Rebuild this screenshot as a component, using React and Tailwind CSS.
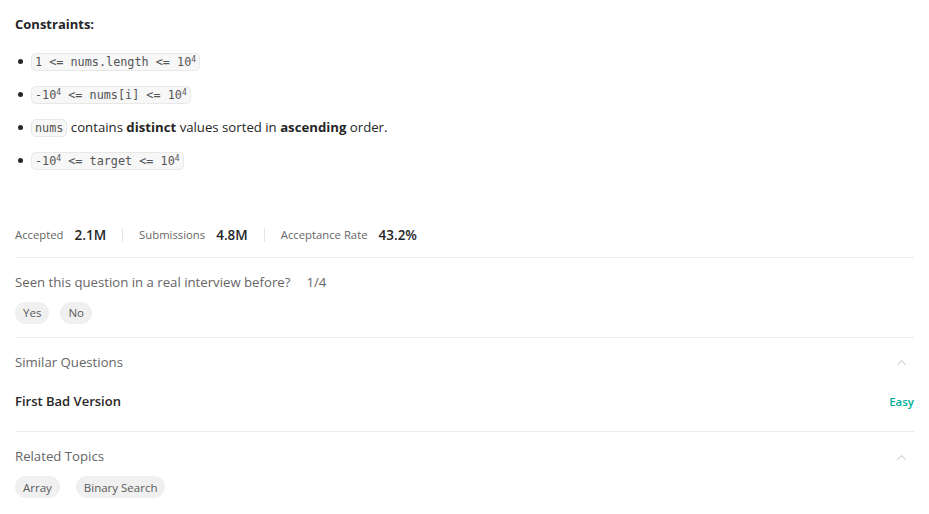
import { ChevronUp } from 'lucide-react';

function Code({ children }) {
  return (
    <code className="rounded-[5px] border border-[#e8e8e8] bg-[#f7f7f8] px-[3px] py-[1px] text-[11.8px] leading-[17px] text-[#555] [font-family:'DejaVu_Sans_Mono',monospace]">
      {children}
    </code>
  );
}

function Pow() {
  return <sup className="text-[8px]">4</sup>;
}

function Pill({ children }) {
  return (
    <span className="inline-flex h-[22px] items-center rounded-full bg-[#f0f0f0] px-[8px] text-[11.5px] text-[#5a5a5a]">
      {children}
    </span>
  );
}

function Stat({ label, value }) {
  return (
    <div className="flex items-center gap-[11px]">
      <span className="text-[11.3px] text-[#666]">{label}</span>
      <span className="text-[13.5px] font-semibold text-[#262626]">{value}</span>
    </div>
  );
}

export default function App() {
  return (
    <div className="min-h-[514px] bg-white px-[15px] pt-[14px] text-[#262626] [font-family:'Open_Sans',sans-serif]">
      <div className="text-[13px] font-bold leading-[20px]">Constraints:</div>

      <ul className="mt-[17px] flex flex-col gap-[12px] pl-[3px]">
        {[
          <Code>1 &lt;= nums.length &lt;= 10<Pow /></Code>,
          <Code>-10<Pow /> &lt;= nums[i] &lt;= 10<Pow /></Code>,
          <>
            <Code>nums</Code> contains <b>distinct</b> values sorted in <b>ascending</b> order.
          </>,
          <Code>-10<Pow /> &lt;= target &lt;= 10<Pow /></Code>,
        ].map((item, i) => (
          <li key={i} className="flex h-[21px] items-center text-[13.2px]">
            <span className="mr-[8px] h-[5px] w-[5px] rounded-full bg-[#262626]" />
            <span className="leading-[21px]">{item}</span>
          </li>
        ))}
      </ul>

      <div className="mt-[54px] flex items-center">
        <Stat label="Accepted" value="2.1M" />
        <div className="mx-[16px] h-[14px] w-px bg-[#e5e5e5]" />
        <Stat label="Submissions" value="4.8M" />
        <div className="mx-[16px] h-[14px] w-px bg-[#e5e5e5]" />
        <Stat label="Acceptance Rate" value="43.2%" />
      </div>

      <div className="mt-[12px] h-px bg-[#ebebeb]" />

      <div className="mt-[15px] flex items-center gap-[16px] text-[13.2px] text-[#666]">
        <span>Seen this question in a real interview before?</span>
        <span>1/4</span>
      </div>
      <div className="mt-[9px] flex gap-[11px]">
        <Pill>Yes</Pill>
        <Pill>No</Pill>
      </div>

      <div className="mt-[13px] h-px bg-[#ebebeb]" />

      <div className="mt-[15px] flex items-center justify-between text-[13.2px] text-[#666]">
        <span>Similar Questions</span>
        <ChevronUp className="mr-[5px] h-[15px] w-[15px] text-[#d4d4d4]" strokeWidth={2} />
      </div>
      <div className="mt-[19px] flex items-center justify-between">
        <span className="text-[13px] font-semibold text-[#262626]">First Bad Version</span>
        <span className="text-[11.5px] font-semibold text-[#00af9b]">Easy</span>
      </div>

      <div className="mt-[20px] h-px bg-[#ebebeb]" />

      <div className="mt-[15px] flex items-center justify-between text-[13.2px] text-[#666]">
        <span>Related Topics</span>
        <ChevronUp className="mr-[5px] h-[15px] w-[15px] text-[#d4d4d4]" strokeWidth={2} />
      </div>
      <div className="mt-[9px] flex gap-[16px]">
        <Pill>Array</Pill>
        <Pill>Binary Search</Pill>
      </div>
    </div>
  );
}
